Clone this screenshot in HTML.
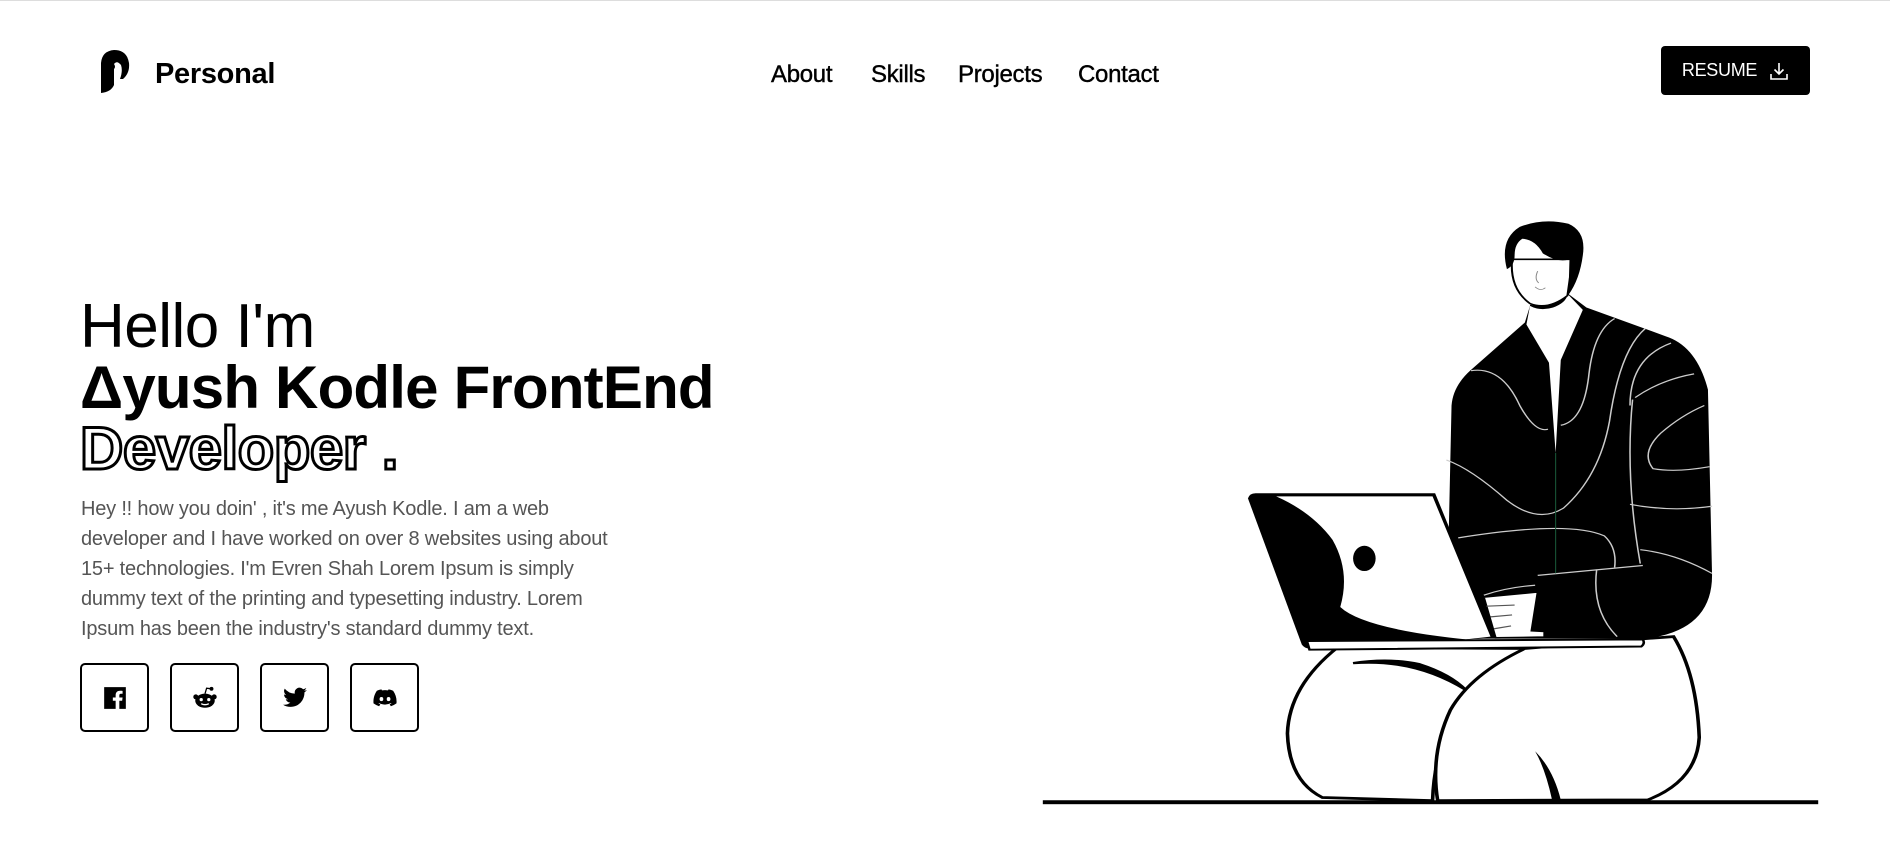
<!DOCTYPE html>
<html><head><meta charset="utf-8">
<style>
*{margin:0;padding:0;box-sizing:border-box}
html,body{width:1890px;height:866px;overflow:hidden;background:#fff;font-family:"Liberation Sans",sans-serif;color:#000}
.topline{position:absolute;left:0;top:0;width:1890px;height:1px;background:#ddd}
.logo{position:absolute;left:99px;top:49px}
.brand{position:absolute;left:155px;top:58px;font-size:29px;font-weight:bold;letter-spacing:-0.3px}
.nav{position:absolute;top:61px;font-size:24px;letter-spacing:-0.3px;-webkit-text-stroke:0.4px #000}
.btn{position:absolute;left:1661px;top:46px;width:149px;height:49px;background:#000;border-radius:4px;color:#fff;font-size:18px;display:flex;align-items:center;justify-content:center;gap:12px;letter-spacing:-0.3px}
.h1{position:absolute;left:80px;top:296px;font-size:62px;line-height:62px;letter-spacing:-0.5px;white-space:nowrap}
.h2{position:absolute;left:80px;top:357px;font-size:60px;font-weight:bold;line-height:62px;letter-spacing:-0.8px;white-space:nowrap}
.h3{position:absolute;left:80px;top:418px;font-size:60px;font-weight:bold;line-height:62px;letter-spacing:-0.5px;white-space:nowrap;color:#fff;-webkit-text-stroke:3px #000}
.p{position:absolute;left:81px;top:494px;font-size:20px;line-height:30px;color:#555;white-space:nowrap;letter-spacing:-0.2px}
.soc{position:absolute;top:663px;width:69px;height:69px;border:2px solid #000;border-radius:5px;display:flex;align-items:center;justify-content:center}
</style></head><body>
<div class="topline"></div>
<svg class="logo" width="32" height="46" viewBox="0 0 32 46"><path d="M2 44 L2 14 Q3 2 15 1 Q28 1 30 14 Q31 24 24 30 L21 30 Q24 22 22 16 Q18 11 15 15 Q17 18 15 20 L15 36 Q12 43 2 44Z" fill="#000"/></svg>
<div class="brand">Personal</div>
<div class="nav" style="left:771px">About</div>
<div class="nav" style="left:871px">Skills</div>
<div class="nav" style="left:958px">Projects</div>
<div class="nav" style="left:1078px">Contact</div>
<div class="btn">RESUME <svg width="20" height="20" viewBox="0 0 20 20" fill="none" stroke="#fff" stroke-width="1.6"><path d="M10 2v11M5.5 8.5 10 13l4.5-4.5M2 13v5h16v-5"/></svg></div>

<div class="h1">Hello I'm</div>
<div class="h2">Δyush Kodle FrontEnd</div>
<div class="h3">Developer .</div>
<div class="p">Hey !! how you doin' , it's me Ayush Kodle. I am a web<br>developer and I have worked on over 8 websites using about<br>15+ technologies. I'm Evren Shah Lorem Ipsum is simply<br>dummy text of the printing and typesetting industry. Lorem<br>Ipsum has been the industry's standard dummy text.</div>

<div class="soc" style="left:80px"><svg width="26" height="26" viewBox="0 0 24 24"><path d="M2 2h20v20h-6v-7.5h2.6l.4-3h-3V9.6c0-.9.3-1.5 1.5-1.5H19V5.4c-.3 0-1.3-.1-2.4-.1-2.4 0-4 1.4-4 4.1v2.1H10v3h2.6V22H2z" fill="#000"/></svg></div>
<div class="soc" style="left:170px"><svg width="26" height="26" viewBox="0 0 24 24"><ellipse cx="12" cy="14.5" rx="9" ry="6.5" fill="#000"/><circle cx="3.5" cy="11" r="2.3" fill="#000"/><circle cx="20.5" cy="11" r="2.3" fill="#000"/><circle cx="18" cy="3.5" r="1.8" fill="#000"/><path d="M12 8 13.5 3 18 3.5" stroke="#000" stroke-width="1.2" fill="none"/><circle cx="8.5" cy="13.5" r="1.5" fill="#fff"/><circle cx="15.5" cy="13.5" r="1.5" fill="#fff"/><path d="M8.5 17.2q3.5 2 7 0" stroke="#fff" stroke-width="1.2" fill="none"/></svg></div>
<div class="soc" style="left:260px"><svg width="26" height="26" viewBox="0 0 24 24"><path d="M23 4.6c-.8.4-1.7.6-2.6.7.9-.6 1.6-1.4 2-2.5-.9.5-1.900.9-2.9 1.1A4.5 4.5 0 0 0 11.8 8 12.8 12.8 0 0 1 2.5 3.3a4.5 4.5 0 0 0 1.4 6c-.7 0-1.4-.2-2-.6 0 2.2 1.6 4 3.6 4.400-.7.2-1.4.2-2 .1.6 1.8 2.2 3.1 4.2 3.1A9 9 0 0 1 1 18.2 12.8 12.8 0 0 0 7.9 20.2c8.3 0 12.8-6.9 12.8-12.8v-.6c.9-.6 1.7-1.4 2.3-2.2z" fill="#000"/></svg></div>
<div class="soc" style="left:350px"><svg width="26" height="26" viewBox="0 0 24 24"><path d="M19.5 5.3A17 17 0 0 0 15.3 4l-.5 1a15.6 15.6 0 0 0-5.6 0l-.5-1a17 17 0 0 0-4.2 1.3C1.8 9.3 1.1 13.2 1.4 17a17 17 0 0 0 5.2 2.6l1.1-1.8c-.6-.2-1.2-.5-1.7-.9l.4-.3a12 12 0 0 0 11.2 0l.4.3c-.5.4-1.1.7-1.7.9l1.1 1.8a17 17 0 0 0 5.2-2.6c.4-4.4-.7-8.3-3.1-11.7z" fill="#000"/><ellipse cx="8.7" cy="13" rx="1.7" ry="1.9" fill="#fff"/><ellipse cx="15.3" cy="13" rx="1.7" ry="1.9" fill="#fff"/></svg></div>

<svg style="position:absolute;left:1030px;top:200px" width="800" height="620" viewBox="0 0 1560 1569" preserveAspectRatio="none">
 <path d="M600 1132 Q505 1230 502 1350 Q505 1470 570 1512 L785 1520 Q790 1330 880 1230 Q930 1170 965 1135 Z" fill="#fff" stroke="#000" stroke-width="7"/>
 <path d="M965 1135 Q860 1200 820 1290 Q780 1400 795 1520 L1205 1518 Q1300 1470 1305 1360 Q1300 1200 1255 1105 L1200 1110 Z" fill="#fff" stroke="#000" stroke-width="7"/>
 <path d="M630 1172 Q750 1160 850 1240 Q820 1200 760 1175 Q700 1158 630 1172Z" fill="#000" stroke="#000" stroke-width="6"/>
 <path d="M985 1395 Q1020 1440 1035 1518 L1018 1518 Q1005 1440 985 1395Z" fill="#000"/>
 <path d="M965 310 L860 430 Q825 470 822 520 L812 1110 L1200 1110 Q1330 1090 1330 950 L1322 480 Q1300 370 1240 345 L1085 272 L1050 238 Q1010 270 975 268 Z" fill="#000"/>
 <path d="M968 315 L1012 412 L1025 640 L1035 405 L1078 278 L1050 240 Q1010 270 975 268 Z" fill="#fff"/>
 <g fill="none" stroke="#ccc" stroke-width="3">
  <path d="M860 432 Q920 420 955 520 Q985 590 1010 580"/>
  <path d="M1035 570 Q1080 560 1090 440 Q1100 330 1140 300"/>
  <path d="M812 658 Q860 680 930 760 Q990 820 1040 780 Q1110 700 1130 560 Q1150 380 1200 325"/>
  <path d="M1170 520 Q1170 400 1250 362"/>
  <path d="M1180 500 Q1230 455 1295 440"/>
  <path d="M1325 675 Q1260 690 1215 680 Q1190 640 1230 590 Q1270 545 1315 520"/>
  <path d="M1175 505 Q1160 700 1190 920"/>
  <path d="M1170 770 Q1250 790 1330 775"/>
  <path d="M835 855 Q1050 810 1120 850 Q1145 880 1140 930"/>
  <path d="M1190 885 Q1260 895 1330 945"/>
  <path d="M1105 935 Q1095 1040 1145 1105"/>
  <path d="M990 950 L1195 925"/>
 </g>
 <path d="M1025 640 L1025 945" stroke="#1a5a3a" stroke-width="2"/>
 <path d="M940 150 Q935 225 975 262 Q1010 280 1048 242 L1058 150 Z" fill="#fff" stroke="#000" stroke-width="4"/>
 <path d="M975 265 Q1015 275 1048 240 Q1045 260 1020 272 Q995 282 975 268Z" fill="#000"/>
 <path d="M930 175 Q915 100 955 68 Q1000 45 1050 60 Q1085 80 1078 140 Q1072 200 1050 240 L1052 150 Q1030 160 1000 135 Q985 100 960 98 Q945 110 945 140 Q945 165 930 175Z" fill="#000"/>
 <path d="M990 180 Q983 200 992 210 M985 220 Q995 232 1005 222" fill="none" stroke="#888" stroke-width="2"/>
 <path d="M425 755 Q428 742 440 742 L790 742 L905 1108 L545 1135 Q535 1135 530 1125 Z" fill="#000"/>
 <path d="M480 750 L785 750 L898 1105 L850 1112 Q650 1085 605 1030 Q625 940 590 860 Q550 790 480 750 Z" fill="#fff"/>
 <ellipse cx="652" cy="907" rx="22" ry="32" fill="#000"/>
 <path d="M540 1116 L1195 1112 Q1200 1122 1192 1130 L545 1138 Z" fill="#fff" stroke="#000" stroke-width="5"/>
 <path d="M885 1005 L990 992 L978 1090 L1003 1092 L1003 1106 L908 1108 Z" fill="#fff" stroke="#000" stroke-width="4"/>
 <path d="M890 1028 L945 1025 M898 1055 L940 1050 M905 1085 L938 1078" stroke="#555" stroke-width="3"/>
 <path d="M885 1000 Q930 980 985 975" stroke="#ccc" stroke-width="3" fill="none"/>
 <rect x="25" y="1519" width="1512" height="10" fill="#000"/>
</svg>
</body></html>
